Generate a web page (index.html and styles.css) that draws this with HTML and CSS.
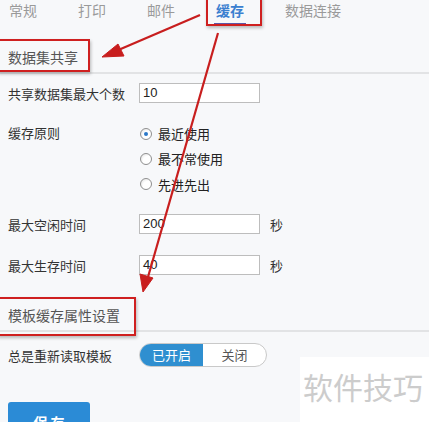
FILE: index.html
```html
<!DOCTYPE html>
<html lang="zh">
<head>
<meta charset="utf-8">
<title>缓存设置</title>
<link rel="stylesheet" href="styles.css">
</head>
<body>
<div class="page">
  <nav class="tabs">
    <span class="tab">常规</span>
    <span class="tab">打印</span>
    <span class="tab">邮件</span>
    <span class="tab active">缓存</span>
    <span class="tab">数据连接</span>
  </nav>

  <h2 class="section-title first">数据集共享</h2>

  <div class="row row-1">
    <span class="label">共享数据集最大个数</span>
    <span class="input">10</span>
  </div>

  <div class="row row-radio">
    <span class="label">缓存原则</span>
    <div class="radios">
      <label class="radio"><span class="dot checked"></span>最近使用</label>
      <label class="radio"><span class="dot"></span>最不常使用</label>
      <label class="radio"><span class="dot"></span>先进先出</label>
    </div>
  </div>

  <div class="row row-3">
    <span class="label">最大空闲时间</span>
    <span class="input">200</span>
    <span class="unit">秒</span>
  </div>

  <div class="row row-4">
    <span class="label">最大生存时间</span>
    <span class="input">40</span>
    <span class="unit">秒</span>
  </div>

  <h2 class="section-title second">模板缓存属性设置</h2>

  <div class="row row-toggle">
    <span class="label">总是重新读取模板</span>
    <div class="toggle">
      <span class="on">已开启</span>
      <span class="off">关闭</span>
    </div>
  </div>

  <div class="actions">
    <div class="save">保 存</div>
  </div>

  <div class="mark box-tab"></div>
  <div class="mark box-s1"></div>
  <div class="mark box-s2"></div>

  <svg class="arrows" width="429" height="422" viewBox="0 0 429 422">
    <g fill="#c81e1e" stroke="#c81e1e">
      <line x1="200" y1="15" x2="116" y2="51" stroke-width="2.2"/>
      <polygon points="102,57 118,44 124,56" stroke-width="1"/>
      <line x1="218" y1="33" x2="148" y2="277" stroke-width="2.2"/>
      <polygon points="143,292 140,274 153,278" stroke-width="1"/>
    </g>
  </svg>

  <div class="watermark">软件技巧</div>
</div>
</body>
</html>
```

FILE: styles.css
```css
html, body {
  margin: 0;
  padding: 0;
}
body {
  background: #f7f8fa;
  font-family: "Noto Sans CJK SC", "Noto Sans", sans-serif;
  color: #333;
}
.page {
  position: relative;
  width: 429px;
  height: 422px;
  overflow: hidden;
}
.tabs {
  display: flex;
  gap: 37px;
  padding-left: 7px;
  height: 26px;
}
.tab {
  font-size: 14px;
  line-height: 20px;
  color: #9a9a9a;
  padding: 0 2px 3px;
  border-bottom: 3px solid transparent;
}
.tab.active {
  color: #3b7fd0;
  font-weight: bold;
  border-bottom-color: #5d57a6;
}
.section-title {
  margin: 0;
  font-weight: normal;
  font-size: 14px;
  line-height: 30px;
  color: #555;
  padding-left: 8px;
  border-bottom: 2px solid #e2e3e5;
}
.section-title.first {
  margin-top: 16px;
}
.section-title.second {
  margin-top: 25px;
}
.row {
  display: flex;
  align-items: center;
  padding-left: 8px;
}
.label {
  width: 131px;
  font-size: 13px;
  color: #333;
  flex: none;
}
.row-1 { margin-top: 9px; }
.row-radio {
  margin-top: 18px;
  align-items: flex-start;
}
.row-radio .label { line-height: 24px; }
.row-3 { margin-top: 17px; }
.row-4 { margin-top: 21px; }
.row-toggle { margin-top: 11px; }
.input {
  box-sizing: border-box;
  width: 121px;
  height: 20px;
  border: 1px solid #bdbdbd;
  background: #fff;
  font-family: "Liberation Sans", Arial, sans-serif;
  font-size: 13px;
  line-height: 18px;
  padding-left: 3px;
  color: #222;
}
.unit {
  margin-left: 10px;
  font-size: 13px;
}
.radios {
  display: flex;
  flex-direction: column;
}
.radio {
  display: flex;
  align-items: center;
  height: 25px;
  font-size: 13px;
  color: #222;
}
.radio:nth-child(3) { height: 26px; }
.dot {
  box-sizing: border-box;
  width: 12px;
  height: 12px;
  border-radius: 50%;
  border: 1px solid #8f8f8f;
  background: radial-gradient(circle at 65% 65%, #ffffff 0 45%, #dcdcdc 100%);
  margin: 0 6px 0 1px;
  position: relative;
}
.dot.checked::after {
  content: "";
  position: absolute;
  left: 3px;
  top: 3px;
  width: 4px;
  height: 4px;
  border-radius: 50%;
  background: #2b78c8;
}
.toggle {
  display: flex;
  box-sizing: border-box;
  width: 128px;
  height: 24px;
  border: 1px solid #c9c9c9;
  border-radius: 12px;
  overflow: hidden;
  background: #fff;
}
.toggle span {
  flex: 1;
  text-align: center;
  font-size: 13px;
  line-height: 22px;
}
.toggle .on {
  background: #2f8fd0;
  color: #fff;
}
.toggle .off {
  color: #555;
}
.actions {
  margin-top: 35px;
  padding-left: 8px;
}
.save {
  width: 82px;
  height: 30px;
  border-radius: 3px;
  background: #2b8bd6;
  color: #fff;
  font-size: 14px;
  font-weight: bold;
  padding-top: 11px;
  line-height: 18px;
  text-align: center;
  box-sizing: border-box;
}
.mark {
  position: absolute;
  border: 2.5px solid #cf2020;
  box-shadow: 1px 2px 3px rgba(0,0,0,0.25);
  box-sizing: border-box;
}
.box-tab { left: 206px; top: -4px; width: 56px; height: 30px; }
.box-s1 { left: -3px; top: 39px; width: 93px; height: 33px; }
.box-s2 { left: -3px; top: 297px; width: 139px; height: 39px; }
.arrows {
  position: absolute;
  left: 0;
  top: 0;
}
.watermark {
  position: absolute;
  left: 300px;
  top: 357px;
  width: 129px;
  height: 65px;
  background: #fff;
  color: #cccccc;
  font-size: 30px;
  line-height: 58px;
  padding-left: 3px;
  box-sizing: border-box;
  white-space: nowrap;
}
```
